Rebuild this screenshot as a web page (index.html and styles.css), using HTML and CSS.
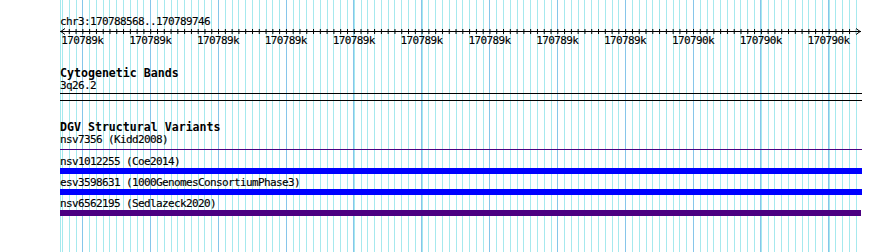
FILE: index.html
```html
<!DOCTYPE html>
<html lang="en">
<head>
    <meta charset="UTF-8">
    <title>chr3:170788568..170789746</title>
    <link rel="stylesheet" href="styles.css">
</head>
<body>
    <div class="genome-view">
        <div class="locus">chr3:170788568..170789746</div>
        <svg class="ruler" width="802" height="8" viewBox="0 0 802 8">
            <defs>
                <pattern id="ticks" x="2" y="0" width="6.785" height="8" patternUnits="userSpaceOnUse">
                    <rect x="0" y="2" width="1" height="5" fill="#000"/>
                </pattern>
            </defs>
            <rect x="6" y="0" width="790" height="8" fill="url(#ticks)"/>
            <line x1="0" y1="4.5" x2="801" y2="4.5" stroke="#000" stroke-width="1"/>
            <polyline points="5,1.5 0.8,4.5 5,7.5" fill="none" stroke="#000" stroke-width="1"/>
            <polyline points="796,1.5 800.2,4.5 796,7.5" fill="none" stroke="#000" stroke-width="1"/>
        </svg>
        <div class="scale">
            <span>170789k</span><span>170789k</span><span>170789k</span><span>170789k</span>
            <span>170789k</span><span>170789k</span><span>170789k</span><span>170789k</span>
            <span>170789k</span><span>170790k</span><span>170790k</span><span>170790k</span>
        </div>

        <div class="track cyto">
            <div class="track-label">Cytogenetic Bands</div>
            <div class="feature-name">3q26.2</div>
        </div>

        <div class="track dgv">
            <div class="track-label">DGV Structural Variants</div>
            <div class="feature">
                <div class="feature-name">nsv7356 (Kidd2008)</div>
                <div class="bar thin"></div>
            </div>
            <div class="feature">
                <div class="feature-name">nsv1012255 (Coe2014)</div>
                <div class="bar"></div>
            </div>
            <div class="feature">
                <div class="feature-name">esv3598631 (1000GenomesConsortiumPhase3)</div>
                <div class="bar"></div>
            </div>
            <div class="feature">
                <div class="feature-name">nsv6562195 (Sedlazeck2020)</div>
                <div class="bar indigo"></div>
            </div>
        </div>
    </div>
</body>
</html>
```

FILE: styles.css
```css
* { margin: 0; padding: 0; box-sizing: border-box; }
body {
    background: #fff;
    color: #000;
    font-family: 'DejaVu Sans Mono', 'Liberation Mono', monospace;
    font-size: 11px;
    letter-spacing: -0.62px;
    line-height: 12px;
    -webkit-text-stroke: 0.15px #000;
}
.genome-view {
    margin-left: 60px;
    width: 802px;
    height: 252px;
    padding-top: 16px;
    background:
        repeating-linear-gradient(to right, #86c6ea 0 1px, transparent 1px 67.85px) 22px 0 / 100% 100% no-repeat,
        repeating-linear-gradient(to right, #a6e9ee 0 1px, transparent 1px 6.785px) 2px 0 / 100% 100% no-repeat,
        linear-gradient(to right, #a6e9ee 0 1px, transparent 1px) 0 0 / 100% 100% no-repeat;
}
.locus {
    white-space: nowrap;
    height: 11px;
}
.ruler {
    display: block;
}
.scale {
    display: flex;
    margin-left: -11.6px;
    white-space: nowrap;
}
.scale span {
    flex: 0 0 67.85px;
    text-align: center;
}
.track-label {
    font-weight: 700;
    font-size: 11.6px;
    letter-spacing: 0;
    line-height: 13px;
    -webkit-text-stroke: 0;
}
.cyto {
    margin-top: 20px;
    padding-bottom: 1px;
    border-bottom: 1px solid #000;
}
.dgv {
    margin-top: 6px;
    border-top: 1px solid #000;
    padding-top: 20px;
}
.feature {
    padding-bottom: 3px;
}
.feature-name {
    white-space: nowrap;
}
.bar {
    height: 6px;
    background: #0000ff;
}
.bar.thin {
    margin-top: 3px;
    margin-bottom: 3px;
    height: 1px;
    background: #4b0082;
}
.bar.indigo {
    width: 801px;
    background: #4b0082;
}
```
